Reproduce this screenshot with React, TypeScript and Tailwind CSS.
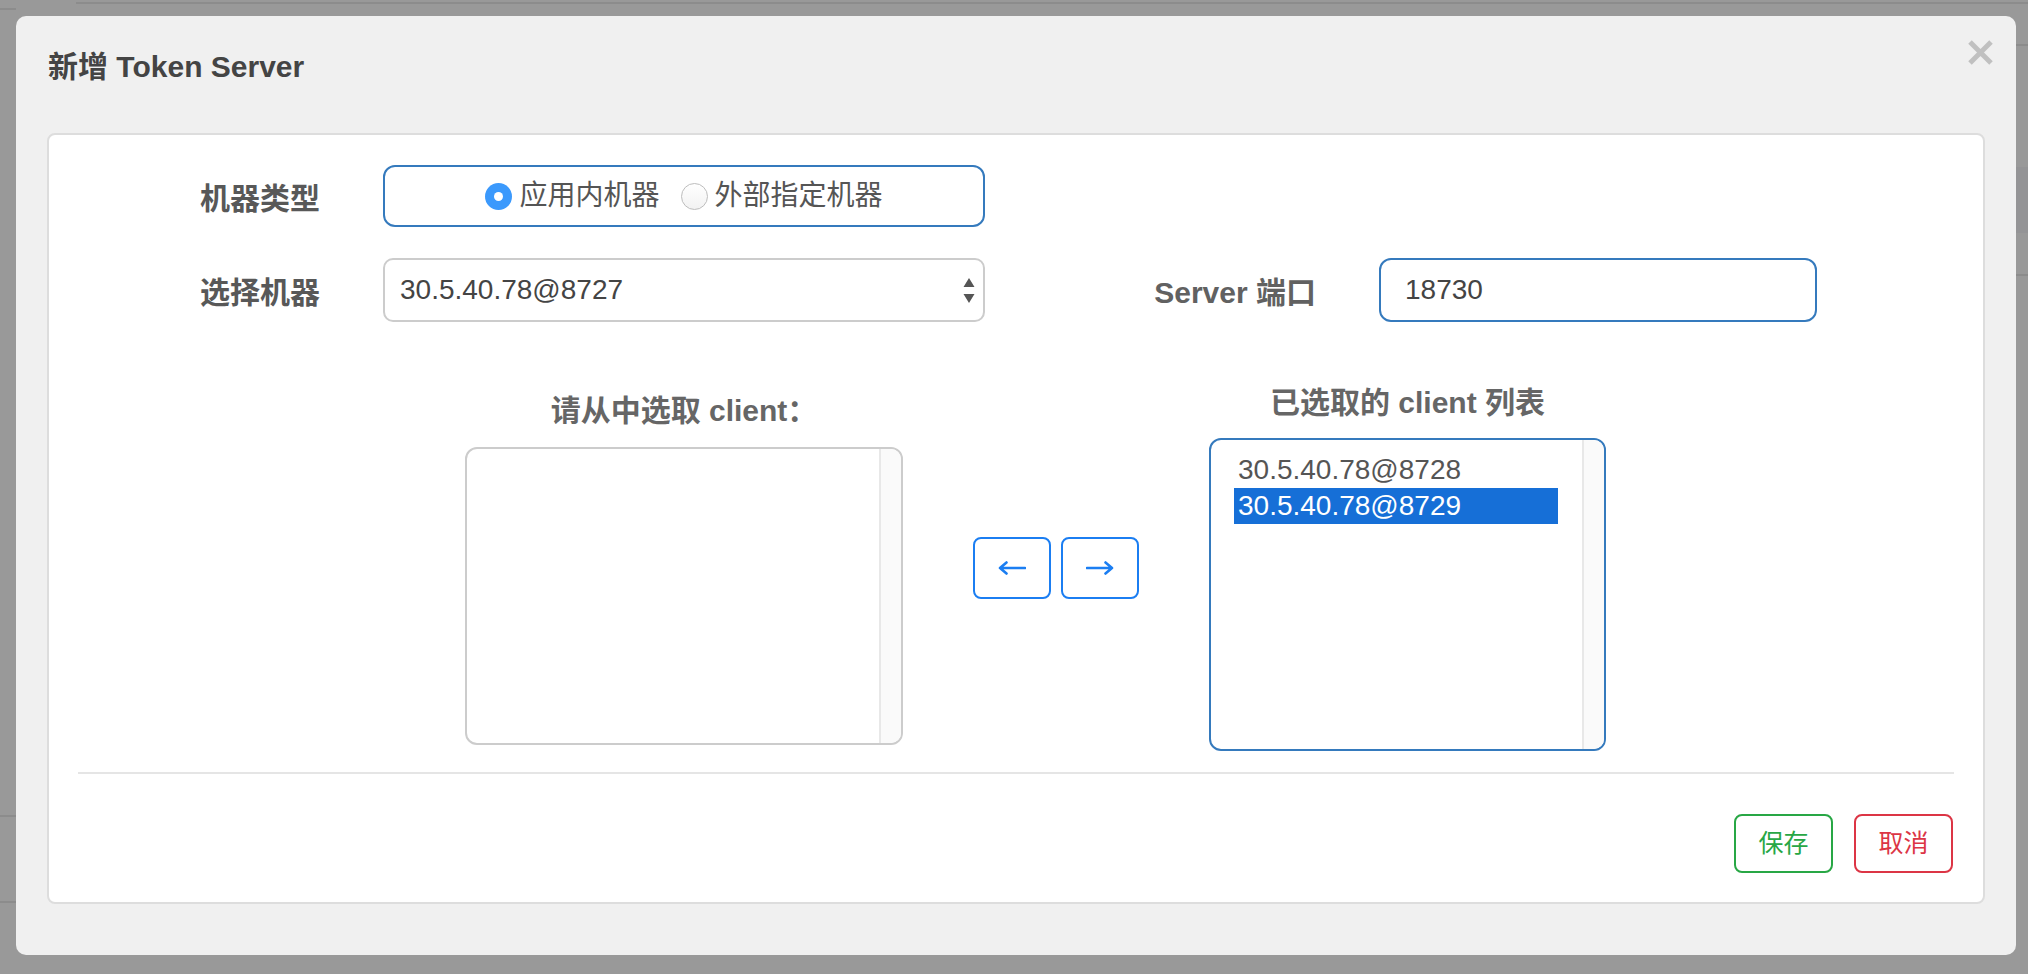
import { useState } from "react";

const BLUE_BORDER = "border-[#357abd]";

function Radio({ checked, label }: { checked: boolean; label: string }) {
  return (
    <label className="flex items-center gap-[7px] cursor-pointer">
      {checked ? (
        <span className="w-[27px] h-[27px] rounded-full bg-[#3b99fc] flex items-center justify-center">
          <span className="w-[9px] h-[9px] rounded-full bg-white" />
        </span>
      ) : (
        <span className="w-[27px] h-[27px] rounded-full border border-[#bdbdbd] bg-linear-to-b from-white to-[#f2f2f2]" />
      )}
      <span className="text-[28px] leading-[36px] text-[#555]">{label}</span>
    </label>
  );
}

function Arrow({ dir }: { dir: "left" | "right" }) {
  return (
    <svg width="28" height="14" viewBox="0 0 28 14" fill="none">
      {dir === "left" ? (
        <path d="M2 7H27M8.5 1.5L2 7L8.5 12.5" stroke="#1b7ef2" strokeWidth="2.6" strokeLinecap="round" strokeLinejoin="round" />
      ) : (
        <path d="M1 7H26M19.5 1.5L26 7L19.5 12.5" stroke="#1b7ef2" strokeWidth="2.6" strokeLinecap="round" strokeLinejoin="round" />
      )}
    </svg>
  );
}

export default function App() {
  const [selected] = useState("30.5.40.78@8729");
  const chosen = ["30.5.40.78@8728", "30.5.40.78@8729"];

  return (
    <div className="relative w-[2028px] h-[974px] overflow-hidden bg-[#999] p-[16px] font-['Liberation_Sans','Noto_Sans_CJK_SC',sans-serif]">
      {/* page underneath the backdrop */}
      <div className="absolute top-[2px] left-[76px] right-0 h-[2px] bg-[#8c8c8c]" />
      <div className="absolute top-[44px] left-[2016px] right-0 h-[2px] bg-[#8c8c8c]" />
      <div className="absolute top-[167px] left-[2016px] right-0 h-[66px] bg-[#949496]" />
      <div className="absolute top-[274px] left-[2016px] right-0 h-[2px] bg-[#8c8c8c]" />
      <div className="absolute top-[8px] left-0 w-[16px] h-[2px] bg-[#8c8c8c]" />
      <div className="absolute top-[815px] left-0 w-[16px] h-[2px] bg-[#8c8c8c]" />
      <div className="absolute top-[901px] left-0 w-[16px] h-[2px] bg-[#8c8c8c]" />

      <div className="relative w-[2000px] h-[939px] rounded-[10px] bg-[#f0f0f0] flex flex-col">
        {/* header */}
        <div className="h-[117px] flex items-start justify-between pl-[32px] pr-[22px]">
          <h4 className="mt-[33px] text-[30px] leading-[36px] font-bold text-[#444]">新增 Token Server</h4>
          <button className="mt-[23px]" aria-label="close">
            <svg width="27" height="27" viewBox="0 0 27 27">
              <path d="M3 3L24 24M24 3L3 24" stroke="#c0c0c0" strokeWidth="5" />
            </svg>
          </button>
        </div>

        {/* body */}
        <div className="mx-[31px] h-[771px] border-2 border-[#ddd] rounded-[8px] bg-white flex flex-col">
          {/* row 1 */}
          <div className="mt-[30px] h-[62px] flex items-center">
            <div className="w-[271px] pt-[6px] text-right text-[30px] leading-[36px] font-bold text-[#585858]">机器类型</div>
            <div className={`ml-[63px] w-[602px] h-[62px] border-2 ${BLUE_BORDER} rounded-[12px] flex items-center justify-center gap-[21px]`}>
              <Radio checked label="应用内机器" />
              <Radio checked={false} label="外部指定机器" />
            </div>
          </div>

          {/* row 2 */}
          <div className="mt-[31px] h-[64px] flex items-center">
            <div className="w-[271px] pt-[6px] text-right text-[30px] leading-[36px] font-bold text-[#585858]">选择机器</div>
            <div className="ml-[63px] w-[602px] h-[64px] border-2 border-[#ccc] rounded-[10px] bg-white flex items-center justify-between pl-[15px] pr-[8px]">
              <span className="text-[28px] leading-[36px] text-[#444]">30.5.40.78@8727</span>
              <svg width="12" height="25" viewBox="0 0 12 25">
                <path d="M6 0L11.5 9H0.5Z M6 25L11.5 16H0.5Z" fill="#555" />
              </svg>
            </div>
            <div className="w-[331px] pt-[6px] text-right text-[30px] leading-[36px] font-bold text-[#616161]">Server 端口</div>
            <div className={`ml-[63px] w-[438px] h-[64px] border-2 ${BLUE_BORDER} rounded-[12px] flex items-center pl-[24px]`}>
              <span className="text-[28px] leading-[36px] text-[#444]">18730</span>
            </div>
          </div>

          {/* row 3: transfer lists */}
          <div className="mt-[63px] flex items-start pl-[416px]">
            <div className="mt-[8px] w-[438px] flex flex-col">
              <div className="h-[36px] text-center whitespace-nowrap text-[30px] leading-[36px] font-bold text-[#666]">请从中选取 client：</div>
              <div className="mt-[18px] h-[298px] border-2 border-[#ccc] rounded-[12px] overflow-hidden flex">
                <div className="flex-1" />
                <div className="w-[22px] bg-[#fafafa] border-l-2 border-[#e8e8e8]" />
              </div>
            </div>

            <div className="ml-[70px] mt-[152px] flex gap-[10px]">
              <button className="w-[78px] h-[62px] border-2 border-[#1b7ef2] rounded-[8px] bg-white flex items-center justify-center">
                <Arrow dir="left" />
              </button>
              <button className="w-[78px] h-[62px] border-2 border-[#1b7ef2] rounded-[8px] bg-white flex items-center justify-center">
                <Arrow dir="right" />
              </button>
            </div>

            <div className="ml-[70px] w-[397px] flex flex-col">
              <div className="h-[36px] text-center whitespace-nowrap text-[30px] leading-[36px] font-bold text-[#666]">已选取的 client 列表</div>
              <div className={`mt-[17px] h-[313px] border-2 ${BLUE_BORDER} rounded-[12px] overflow-hidden flex`}>
                <div className="flex-1 pt-[12px] pl-[23px] pr-[24px] flex flex-col">
                  {chosen.map((c) => (
                    <div
                      key={c}
                      className={`h-[36px] pl-[4px] text-[28px] leading-[36px] ${
                        c === selected ? "bg-[#166fd7] text-white" : "text-[#555]"
                      }`}
                    >
                      {c}
                    </div>
                  ))}
                </div>
                <div className="w-[22px] bg-[#fafafa] border-l-2 border-[#e8e8e8]" />
              </div>
            </div>
          </div>

          <div className="mt-[21px] mx-[29px] h-[2px] bg-[#e5e5e5]" />

          {/* footer */}
          <div className="mt-[40px] pr-[30px] flex justify-end gap-[21px]">
            <button className="w-[99px] h-[59px] border-2 border-[#28a745] rounded-[8px] bg-white text-[25px] text-[#28a745]">保存</button>
            <button className="w-[99px] h-[59px] border-2 border-[#dc3545] rounded-[8px] bg-white text-[25px] text-[#dc3545]">取消</button>
          </div>
        </div>
      </div>
    </div>
  );
}
